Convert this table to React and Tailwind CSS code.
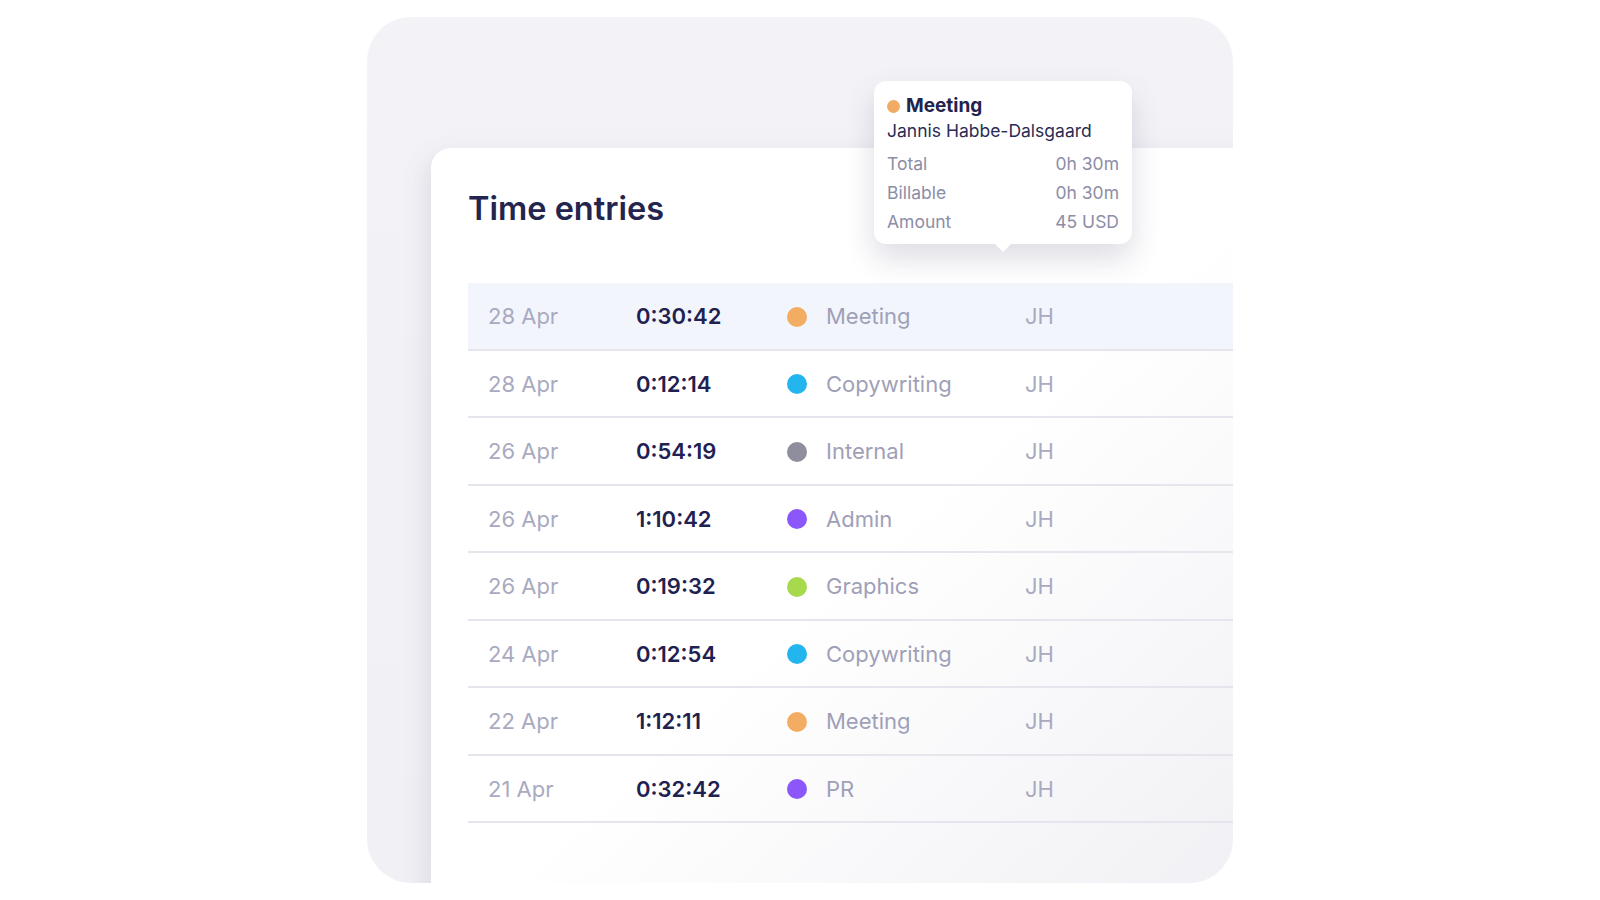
const entries = [
  { date: '28 Apr', time: '0:30:42', dot: 'bg-[#f2ad63]', label: 'Meeting', active: true },
  { date: '28 Apr', time: '0:12:14', dot: 'bg-[#22b5ee]', label: 'Copywriting' },
  { date: '26 Apr', time: '0:54:19', dot: 'bg-[#8e8e9c]', label: 'Internal' },
  { date: '26 Apr', time: '1:10:42', dot: 'bg-[#8b57fa]', label: 'Admin' },
  { date: '26 Apr', time: '0:19:32', dot: 'bg-[#a6da4c]', label: 'Graphics' },
  { date: '24 Apr', time: '0:12:54', dot: 'bg-[#22b5ee]', label: 'Copywriting' },
  { date: '22 Apr', time: '1:12:11', dot: 'bg-[#f2ad63]', label: 'Meeting' },
  { date: '21 Apr', time: '0:32:42', dot: 'bg-[#8b57fa]', label: 'PR' },
]

const stats = [
  ['Total', '0h 30m'],
  ['Billable', '0h 30m'],
  ['Amount', '45 USD'],
]

function Tooltip() {
  return (
    <div className="absolute left-[874px] top-[81px] w-[258px] rounded-[12px] bg-white px-[13px] pt-[13px] pb-[7px] shadow-[0_14px_30px_rgba(40,40,90,0.16)]">
      <div className="flex h-[24px] items-center gap-[6px]">
        <span className="h-[13px] w-[13px] rounded-full bg-[#f2ab62]" />
        <span className="text-[19px] font-bold text-[#22244e]">Meeting</span>
      </div>
      <div className="h-[26px] text-[17.5px] leading-[26px] text-[#2a2c55]">Jannis Habbe-Dalsgaard</div>
      <div className="mt-[6px]">
        {stats.map(([k, v]) => (
          <div key={k} className="flex h-[29px] items-center justify-between text-[17.5px] text-[#8c8da6]">
            <span>{k}</span>
            <span>{v}</span>
          </div>
        ))}
      </div>
      <div className="absolute -bottom-[8px] left-1/2 h-0 w-0 -translate-x-1/2 border-x-[8px] border-t-[8px] border-x-transparent border-t-white" />
    </div>
  )
}

export default function App() {
  return (
    <div className="relative min-h-[900px] w-[1600px] bg-white font-[Inter,sans-serif]">
      <div className="pt-[17px] pl-[367px]">
        <div className="h-[866px] w-[866px] overflow-hidden rounded-[44px] bg-linear-to-b from-[#f3f3f7] to-[#f1f1f5] pt-[131px] pl-[64px]">
          <div className="h-[800px] w-[880px] rounded-[20px] bg-linear-to-br from-white via-white to-[#eeeef3] pt-[41px] pl-[37px] shadow-[-6px_8px_26px_rgba(40,40,90,0.10)]">
            <h1 className="text-[32.5px] font-semibold leading-[40px] text-[#23254f]">Time entries</h1>
            <div className="mt-[54px] w-[820px]">
              {entries.map((e, i) => (
                <div
                  key={i}
                  className={`flex h-[67.5px] items-center border-b-2 border-[#e5e5ed] pl-[20px] pt-[2px] text-[22px] ${e.active ? 'bg-[#f3f5fd]' : ''}`}
                >
                  <span className="w-[148px] text-[#a9aac0]">{e.date}</span>
                  <span className="w-[151px] font-semibold text-[#1f2150]">{e.time}</span>
                  <span className="w-[39px]">
                    <span className={`block h-[20px] w-[20px] rounded-full ${e.dot}`} />
                  </span>
                  <span className="w-[199px] text-[#9fa0b7]">{e.label}</span>
                  <span className="text-[#a9aac0]">JH</span>
                </div>
              ))}
            </div>
          </div>
        </div>
      </div>
      <Tooltip />
    </div>
  )
}
